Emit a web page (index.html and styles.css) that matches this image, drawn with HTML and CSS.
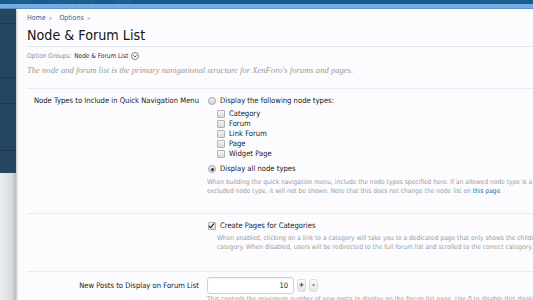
FILE: index.html
```html
<!DOCTYPE html>
<html>
<head>
  <title>Node &amp; Forum List</title>
  <link rel="stylesheet" href="styles.css">
</head>
<body>
  <div class="top-bar">
    <div class="top-tabs"><span>Users</span><span>Appearance</span><span>Tools</span></div>
    <div class="top-user">Administrator</div>
  </div>
  <div class="top-strip"></div>

  <div class="layout">
    <div class="sidebar">
      <div class="side-nav">
        <div class="side-item" style="height: 14px;"></div>
        <div class="side-item" style="height: 53px;"></div>
        <div class="side-item" style="height: 25px;"></div>
        <div class="side-item" style="height: 46px;"></div>
        <div class="side-item last" style="height: 22px;"></div>
      </div>
      <div class="side-fill"></div>
    </div>

    <div class="main">
      <div class="breadcrumb">
        <a href="#">Home</a><span class="sep">&gt;</span>
        <a href="#">Options</a><span class="sep">&gt;</span>
      </div>
      <h1 class="title">Node &amp; Forum List</h1>

      <div class="groups">
        <span class="groups-label">Option Groups:</span>
        <span class="groups-name">Node &amp; Forum List</span>
        <span class="groups-arrow">
          <svg width="8" height="8" viewBox="0 0 8 8"><circle cx="4" cy="4" r="3.5" fill="#fff" stroke="#666" stroke-width="0.8"/><path d="M2.3 3.2 L4 5 L5.7 3.2" fill="none" stroke="#444" stroke-width="0.9"/></svg>
        </span>
      </div>
      <div class="description">The node and forum list is the primary navigational structure for XenForo's forums and pages.</div>

      <div class="options">
        <!-- Quick navigation node types -->
        <div class="option-row row-nodes">
          <div class="option-label">Node Types to Include in Quick Navigation Menu</div>
          <div class="option-value">
            <div class="choice"><span class="radio"></span>Display the following node types:</div>
            <div class="sub-choices">
              <div class="choice"><span class="check"></span>Category</div>
              <div class="choice"><span class="check"></span>Forum</div>
              <div class="choice"><span class="check"></span>Link Forum</div>
              <div class="choice"><span class="check"></span>Page</div>
              <div class="choice"><span class="check"></span>Widget Page</div>
            </div>
            <div class="choice"><span class="radio checked"></span>Display all node types</div>
            <div class="explain">When building the quick navigation menu, include the node types specified here. If an allowed node type is a child of an<br>excluded node type, it will not be shown. Note that this does not change the node list on <a href="#">this page</a>.</div>
          </div>
        </div>

        <!-- Category pages -->
        <div class="option-row row-categories">
          <div class="option-label"></div>
          <div class="option-value">
            <div class="choice"><span class="check checked"></span>Create Pages for Categories</div>
            <div class="explain">When enabled, clicking on a link to a category will take you to a dedicated page that only shows the children of this<br>category. When disabled, users will be redirected to the full forum list and scrolled to the correct category.</div>
          </div>
        </div>

        <!-- New posts count -->
        <div class="option-row row-posts">
          <div class="option-label">New Posts to Display on Forum List</div>
          <div class="option-value">
            <div class="spin">
              <div class="spin-input">10</div>
              <button class="spin-button">+</button>
              <button class="spin-button">-</button>
            </div>
            <div class="explain">This controls the maximum number of new posts to display on the forum list page. Use 0 to disable this display.</div>
          </div>
        </div>
      </div>
    </div>
  </div>
</body>
</html>
```

FILE: styles.css
```css
body {
  margin: 0;
  padding: 0;
  width: 533px;
  height: 300px;
  overflow: hidden;
  font-family: "DejaVu Sans Condensed", "DejaVu Sans", sans-serif;
  background-color: #fcfcff;
}

a {
  color: #2f5f8f;
  text-decoration: none;
}

.top-bar {
  height: 4px;
  background-color: #175a8e;
  display: flex;
  justify-content: space-between;
  overflow: hidden;
  font-size: 8px;
  line-height: 1px;
  color: #2b6697;
}

.top-tabs {
  display: flex;
  gap: 20px;
  padding-left: 10px;
}

.top-user {
  padding-right: 6px;
}

.top-strip {
  height: 4px;
  background-color: #76ace0;
  border-bottom: 1px solid #5d95c9;
}

.layout {
  display: flex;
  height: 291px;
}

.sidebar {
  width: 16px;
  flex-shrink: 0;
  display: flex;
  flex-direction: column;
  box-shadow: 1px 0 2px rgba(0, 0, 0, 0.25);
  z-index: 1;
}

.side-nav {
  background-color: #264660;
}

.side-item {
  border-bottom: 1px solid #1d3a52;
}

.side-item.last {
  border-bottom: none;
}

.side-fill {
  flex-grow: 1;
  background: linear-gradient(to right, #eceef0, #d9dde0 70%, #b8bec4);
}

.main {
  flex-grow: 1;
  min-width: 0;
  padding-left: 11px;
  background-color: #fcfcff;
}

.breadcrumb {
  font-size: 7px;
  margin-top: 4px;
  height: 10px;
  line-height: 10px;
}

.breadcrumb .sep {
  color: #7d8a96;
  font-size: 5px;
  margin: 0 5px 0 3px;
}

.title {
  font-weight: normal;
  font-size: 14.2px;
  line-height: 18px;
  margin: 3px 0 0 0;
  color: #151515;
  padding-bottom: 2px;
  border-bottom: 1px solid #e1e8ee;
}

.groups {
  font-size: 6.5px;
  margin-top: 3px;
  height: 12px;
  line-height: 12px;
  display: flex;
  align-items: center;
  gap: 3px;
}

.groups-label {
  color: #8b8b8b;
}

.groups-name {
  color: #2a2a2a;
}

.groups-arrow {
  display: flex;
}

.description {
  font-family: "Liberation Serif", serif;
  font-style: italic;
  font-size: 8.6px;
  line-height: 16px;
  color: #9a9a9a;
  white-space: nowrap;
  padding-bottom: 10px;
  border-bottom: 1px solid #e3edf3;
}

.option-row {
  display: grid;
  grid-template-columns: 172px 1fr;
  column-gap: 8px;
  box-sizing: border-box;
  border-bottom: 1px solid #e3eef3;
  font-size: 7.6px;
}

.row-nodes {
  padding-top: 6px;
  height: 125px;
}

.row-categories {
  padding-top: 6px;
  height: 58px;
}

.row-posts {
  padding-top: 5px;
  border-bottom: none;
}

.option-label {
  text-align: right;
  color: #202020;
  line-height: 12px;
  white-space: nowrap;
}

.row-posts .option-label {
  line-height: 17px;
}

.option-value {
  color: #202020;
  white-space: nowrap;
}

.choice {
  display: flex;
  align-items: center;
  height: 12px;
  line-height: 12px;
}

.sub-choices {
  padding-left: 10px;
  margin: 2px 0 4px 0;
}

.sub-choices .choice {
  height: 10px;
  line-height: 10px;
}

.radio {
  width: 6px;
  height: 6px;
  border: 1px solid #a8a8a8;
  border-radius: 50%;
  background: linear-gradient(#eeeeee, #d4d4d4);
  margin: 0 4px 0 1px;
  display: flex;
  align-items: center;
  justify-content: center;
}

.radio.checked::after {
  content: "";
  width: 3px;
  height: 3px;
  border-radius: 50%;
  background-color: #333;
}

.check {
  width: 6px;
  height: 6px;
  border: 1px solid #b4b4b4;
  border-radius: 1px;
  background: linear-gradient(#f4f4f4, #dadada);
  margin-right: 4px;
  position: relative;
}

.row-categories .check {
  margin-left: 1px;
}

.check.checked::after {
  content: "";
  position: absolute;
  left: 1px;
  top: -1px;
  width: 2px;
  height: 5px;
  border-right: 1.5px solid #222;
  border-bottom: 1.5px solid #222;
  transform: rotate(40deg);
}

.explain {
  font-size: 6.6px;
  line-height: 9px;
  color: #9b9b9b;
  margin-top: 3px;
}

.row-categories .explain {
  margin-top: 2px;
  padding-left: 10px;
}

.spin {
  display: flex;
  align-items: center;
  gap: 3px;
  height: 17px;
}

.spin-input {
  width: 80px;
  height: 15px;
  line-height: 15px;
  border: 1px solid #d2d2d2;
  border-radius: 3px;
  background-color: #fff;
  text-align: right;
  padding-right: 5px;
  font-size: 7.5px;
  box-shadow: inset 0 1px 1px rgba(0, 0, 0, 0.06);
}

.spin-button {
  width: 9px;
  height: 13px;
  padding: 0;
  border: 1px solid #dcdcdc;
  border-radius: 3px;
  background: linear-gradient(#fbfbfb, #e6e6e6);
  font-family: "DejaVu Sans", sans-serif;
  font-size: 7px;
  font-weight: bold;
  color: #333;
  line-height: 11px;
}

.row-posts .explain {
  margin-top: 1px;
}
```
